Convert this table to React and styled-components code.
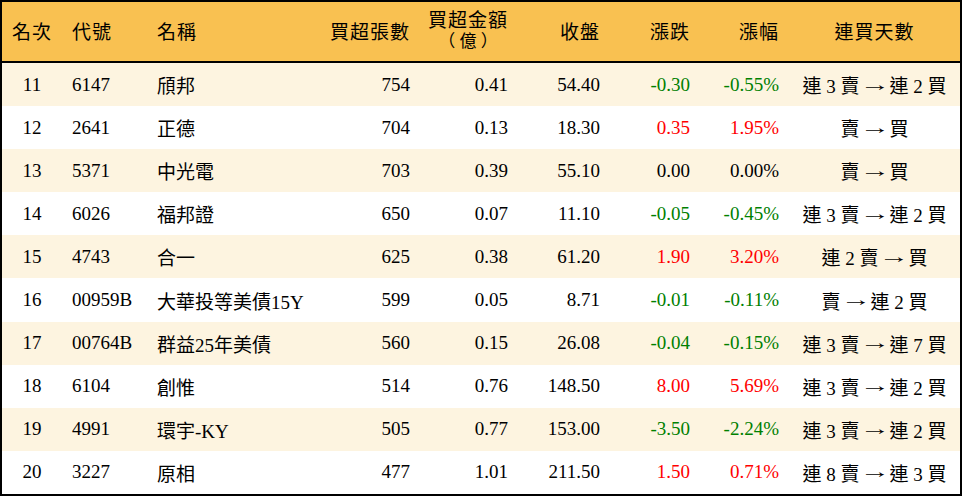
import React from 'react'
import styled, { createGlobalStyle } from 'styled-components'

const rows = [
  ['11', '6147', '頎邦', '754', '0.41', '54.40', '-0.30', '-0.55%', '連 3 賣 → 連 2 買'],
  ['12', '2641', '正德', '704', '0.13', '18.30', '0.35', '1.95%', '賣 → 買'],
  ['13', '5371', '中光電', '703', '0.39', '55.10', '0.00', '0.00%', '賣 → 買'],
  ['14', '6026', '福邦證', '650', '0.07', '11.10', '-0.05', '-0.45%', '連 3 賣 → 連 2 買'],
  ['15', '4743', '合一', '625', '0.38', '61.20', '1.90', '3.20%', '連 2 賣 → 買'],
  ['16', '00959B', '大華投等美債15Y', '599', '0.05', '8.71', '-0.01', '-0.11%', '賣 → 連 2 買'],
  ['17', '00764B', '群益25年美債', '560', '0.15', '26.08', '-0.04', '-0.15%', '連 3 賣 → 連 7 買'],
  ['18', '6104', '創惟', '514', '0.76', '148.50', '8.00', '5.69%', '連 3 賣 → 連 2 買'],
  ['19', '4991', '環宇-KY', '505', '0.77', '153.00', '-3.50', '-2.24%', '連 3 賣 → 連 2 買'],
  ['20', '3227', '原相', '477', '1.01', '211.50', '1.50', '0.71%', '連 8 賣 → 連 3 買'],
]

// alignment per column
const aligns = ['center', 'left', 'left', 'right', 'right', 'right', 'right', 'right', 'center']

const toneOf = (change) => {
  const n = parseFloat(change)
  if (n > 0) return 'up'
  if (n < 0) return 'down'
  return 'flat'
}

const Streak = ({ text }) => {
  const [from, to] = text.split(' → ')
  return (
    <>
      {from}
      <Arrow>→</Arrow>
      {to}
    </>
  )
}

const App = () => {
  return (
    <>
      <GlobalStyle />
      <Table>
        <HeaderRow>
          <HeadCell $align='center'>名次</HeadCell>
          <HeadCell $align='left'>代號</HeadCell>
          <HeadCell $align='left'>名稱</HeadCell>
          <HeadCell $align='right'>買超張數</HeadCell>
          <HeadCell $align='right'>
            <Stack>
              <span>買超金額</span>
              <Paren>（ 億 ）</Paren>
            </Stack>
          </HeadCell>
          <HeadCell $align='right'>收盤</HeadCell>
          <HeadCell $align='right'>漲跌</HeadCell>
          <HeadCell $align='right'>漲幅</HeadCell>
          <HeadCell $align='center'>連買天數</HeadCell>
        </HeaderRow>
        {rows.map((row, i) => {
          const tone = toneOf(row[6])
          return (
            <Row key={row[0]} $striped={i % 2 === 0}>
              {row.map((value, c) => (
                <Cell
                  key={c}
                  $align={aligns[c]}
                  $tone={c === 6 || c === 7 ? tone : 'flat'}
                >
                  {c === 8 ? <Streak text={value} /> : value}
                </Cell>
              ))}
            </Row>
          )
        })}
      </Table>
    </>
  )
}

const GlobalStyle = createGlobalStyle`
  html, body {
    margin: 0;
    padding: 0;
    background: #ffffff;
  }
  body {
    font-family: "Liberation Serif", "Noto Sans CJK TC", serif;
  }
`

const columns = '60px 85px 173px 100px 98px 92px 90px 89px 171px'

const Table = styled.div`
  width: 962px;
  box-sizing: border-box;
  border: 2px solid #000;
  background: #fff;
`

const HeaderRow = styled.div`
  display: grid;
  grid-template-columns: ${columns};
  height: 59px;
  background: #f9c151;
  border-bottom: 2px solid #000;
`

const Row = styled.div`
  display: grid;
  grid-template-columns: ${columns};
  height: 43.1px;
  background: ${(p) => (p.$striped ? '#fdf4e0' : '#ffffff')};
`

const justify = { left: 'flex-start', right: 'flex-end', center: 'center' }

const Cell = styled.div`
  display: flex;
  align-items: center;
  justify-content: ${(p) => justify[p.$align]};
  padding: 0 10px;
  font-size: 19px;
  white-space: pre;
  color: ${(p) =>
    p.$tone === 'up' ? '#ff0000' : p.$tone === 'down' ? '#008000' : '#000'};
`

const HeadCell = styled(Cell)`
  padding-bottom: 2px;
  letter-spacing: 1px;
`

const Stack = styled.div`
  display: flex;
  flex-direction: column;
  align-items: center;
  gap: 0;

  & > span {
    display: block;
    height: 21px;
    line-height: 21px;
  }
`

const Paren = styled.span`
  letter-spacing: 0;
  font-size: 17px;
`

const Arrow = styled.span`
  display: inline-block;
  width: 24px;
  margin: 0 3px;
  text-align: center;
  font-family: "Liberation Serif", serif;
  transform: scaleX(1.6);
`

export default App
